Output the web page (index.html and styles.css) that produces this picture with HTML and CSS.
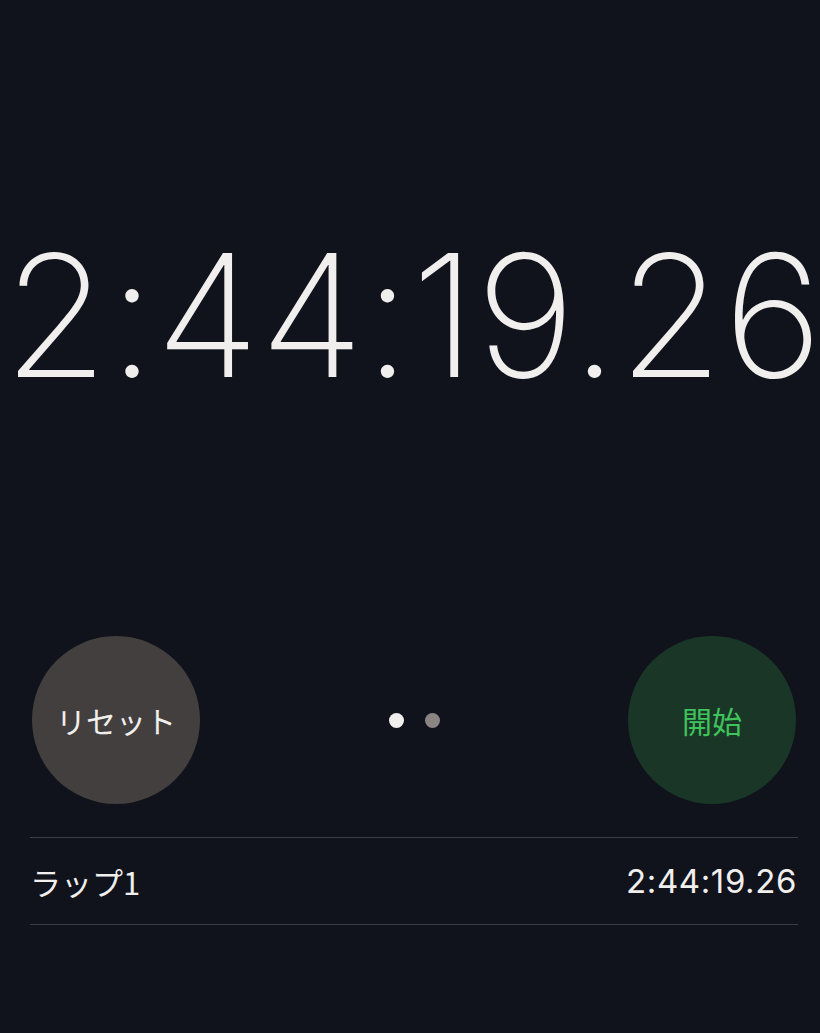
FILE: index.html
```html
<!DOCTYPE html>
<html lang="ja">
<head>
<meta charset="utf-8">
<link rel="stylesheet" href="styles.css">
</head>
<body>
<div class="screen">
  <div class="display">
    <div class="time">2:44:19.26</div>
  </div>
  <div class="controls">
    <button class="btn btn-reset">リセット</button>
    <div class="pager">
      <span class="dot dot-active"></span>
      <span class="dot"></span>
    </div>
    <button class="btn btn-start">開始</button>
  </div>
  <div class="laps">
    <div class="lap">
      <span class="lap-name">ラップ1</span>
      <span class="lap-time">2:44:19.26</span>
    </div>
  </div>
</div>
</body>
</html>
```
FILE: styles.css
```css
html, body {
  margin: 0;
  padding: 0;
  background: #10131b;
}
.screen {
  width: 820px;
  height: 1033px;
  display: flex;
  flex-direction: column;
  font-family: "Inter", "Noto Sans CJK JP", sans-serif;
  color: #f1efed;
}
.display {
  height: 630px;
  display: flex;
  align-items: center;
  justify-content: center;
  padding-bottom: 6px;
}
.time {
  font-family: "Inter", sans-serif;
  font-weight: 200;
  font-size: 170px;
  line-height: 1;
  letter-spacing: 0.2px;
  white-space: nowrap;
  margin-left: 6px;
}
.controls {
  display: flex;
  align-items: center;
  justify-content: space-between;
  padding: 0 24px 0 32px;
}
.btn {
  width: 168px;
  height: 168px;
  border-radius: 50%;
  border: none;
  padding: 0;
  font-family: "Noto Sans CJK JP", sans-serif;
  font-size: 30px;
  display: flex;
  align-items: center;
  justify-content: center;
}
.btn-reset {
  background: #433f3f;
  color: #f1efed;
}
.btn-start {
  background: #1a3627;
  color: #3fc35c;
}
.pager {
  display: flex;
  gap: 21px;
}
.dot {
  width: 15px;
  height: 15px;
  border-radius: 50%;
  background: #8a8583;
}
.dot-active {
  background: #f1efed;
}
.laps {
  margin: 33px 22px 0 30px;
  border-top: 1px solid #3a3d44;
}
.lap {
  height: 86px;
  border-bottom: 1px solid #3a3d44;
  display: flex;
  align-items: center;
  justify-content: space-between;
  padding: 0 1px 0 0;
  font-size: 31px;
}
.lap-name {
  font-family: "Noto Sans CJK JP", sans-serif;
}
.lap-time {
  font-family: "Inter", sans-serif;
  font-size: 33px;
  letter-spacing: 0.6px;
}
```
